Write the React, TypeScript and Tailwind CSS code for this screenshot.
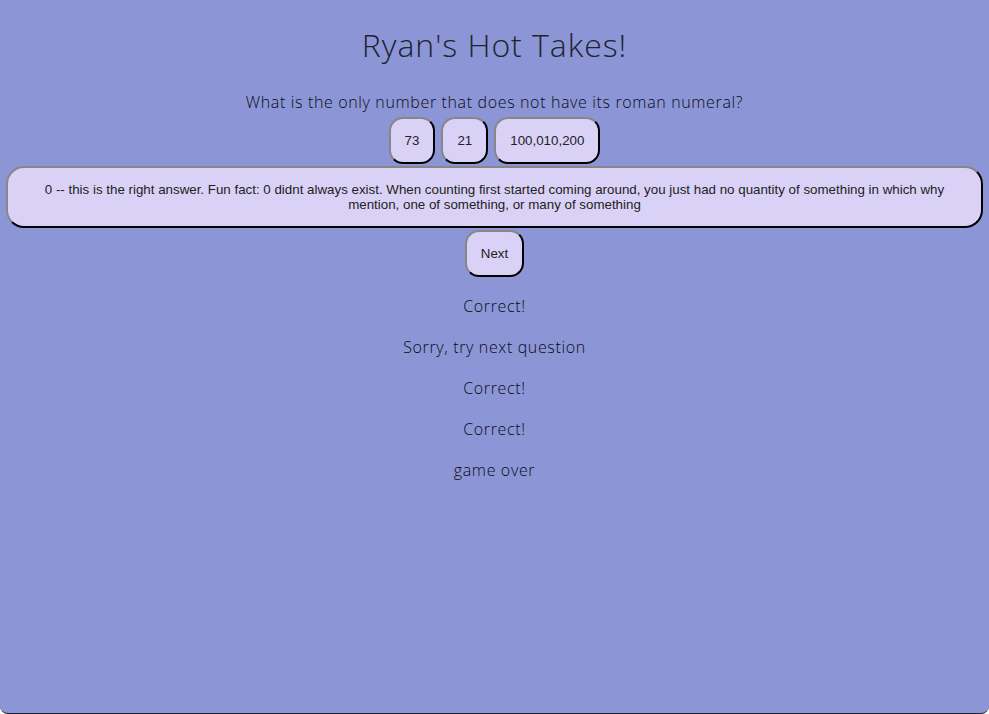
const results = ["Correct!", "Sorry, try next question", "Correct!", "Correct!", "game over"];

const btn =
  "bg-[#d9d2f6] text-[#222] text-[13.33px] leading-[15px] px-[14px] py-[14px] border-2 border-[#333] [border-style:outset] rounded-[14px] [font-family:Arial,'Liberation_Sans',sans-serif]";

export default function App() {
  return (
    <div className="min-h-[714px] bg-[#8c96d7] rounded-b-lg border-b border-[#222] text-center text-[#0b0b14] [font-family:'Open_Sans',sans-serif] font-light tracking-[0.04em]">
      <h1 className="pt-[21px] text-[32px] leading-[48px] text-[#1f232d] font-light tracking-[0.03em]">
        Ryan's Hot Takes!
      </h1>

      <p className="mt-[21px] text-[16px] leading-[24px]">
        What is the only number that does not have its roman numeral?
      </p>

      {/* Choices */}
      <div className="flex justify-center gap-[6px] mt-[3px] tracking-normal">
        <button className={btn}>73</button>
        <button className={btn}>21</button>
        <button className={btn}>100,010,200</button>
      </div>

      <div className={`${btn} mx-[6px] mt-[2px] px-[30px] rounded-[18px] tracking-normal`}>
        0 -- this is the right answer. Fun fact: 0 didnt always exist. When counting first started coming around, you
        just had no quantity of something in which why mention, one of something, or many of something
      </div>

      <div className="flex justify-center mt-[2px] tracking-normal">
        <button className={btn}>Next</button>
      </div>

      {/* Results */}
      <div className="mt-[17px] flex flex-col gap-[17px] text-[16px] leading-[24px]">
        {results.map((r, i) => (
          <p key={i}>{r}</p>
        ))}
      </div>
    </div>
  );
}
